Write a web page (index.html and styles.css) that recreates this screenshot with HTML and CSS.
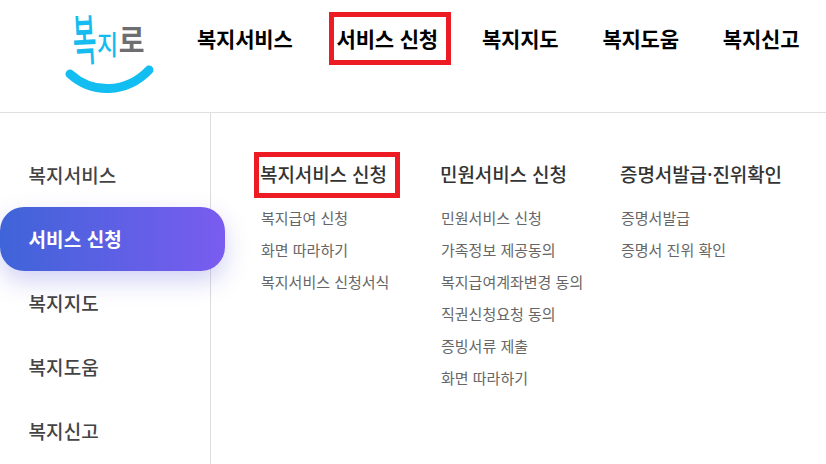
FILE: index.html
```html
<!DOCTYPE html>
<html lang="ko">
<head>
    <meta charset="UTF-8">
    <title>복지로 메뉴</title>
    <link rel="stylesheet" href="styles.css">
</head>
<body>
    <header class="top">
        <a class="logo" href="#">
            <svg class="logo-smile" width="90" height="36" viewBox="0 0 90 36">
                <path d="M6 11 C28 31 62 31 85 7" fill="none" stroke="#12bdf2" stroke-width="9" stroke-linecap="round"/>
            </svg>
            <span class="logo-word"><span class="logo-bok">복</span><span class="logo-ji">지</span><span class="logo-ro">로</span></span>
        </a>
        <nav class="gnb">
            <a href="#">복지서비스</a>
            <a href="#" class="marked">서비스 신청</a>
            <a href="#">복지지도</a>
            <a href="#">복지도움</a>
            <a href="#">복지신고</a>
        </nav>
    </header>

    <div class="menu">
        <ul class="side">
            <li>복지서비스</li>
            <li class="active">서비스 신청</li>
            <li>복지지도</li>
            <li>복지도움</li>
            <li>복지신고</li>
        </ul>
        <div class="cols">
            <section class="col">
                <h3 class="marked">복지서비스 신청</h3>
                <a href="#">복지급여 신청</a>
                <a href="#">화면 따라하기</a>
                <a href="#">복지서비스 신청서식</a>
            </section>
            <section class="col">
                <h3>민원서비스 신청</h3>
                <a href="#">민원서비스 신청</a>
                <a href="#">가족정보 제공동의</a>
                <a href="#">복지급여계좌변경 동의</a>
                <a href="#">직권신청요청 동의</a>
                <a href="#">증빙서류 제출</a>
                <a href="#">화면 따라하기</a>
            </section>
            <section class="col">
                <h3>증명서발급·진위확인</h3>
                <a href="#">증명서발급</a>
                <a href="#">증명서 진위 확인</a>
            </section>
        </div>
    </div>
</body>
</html>
```

FILE: styles.css
```css
* {
    box-sizing: border-box;
}
html, body {
    height: 100%;
}
body {
    margin: 0;
    overflow: hidden;
    background: #fff;
    font-family: "Noto Sans CJK KR", "Noto Sans", sans-serif;
}
a {
    color: inherit;
    text-decoration: none;
}

.top {
    display: flex;
    height: 113px;
    border-bottom: 1px solid #e0e0e0;
}
.logo {
    position: relative;
    display: block;
    width: 197px;
    flex: none;
}
.logo-word {
    position: absolute;
    left: 71px;
    top: 8px;
    display: flex;
    align-items: flex-start;
    line-height: 1;
}
.logo-bok {
    margin: 2px -9px 0 0;
    color: #14bcef;
    font-size: 38px;
    font-weight: 500;
    transform: rotate(-3deg) scale(0.68, 1.45);
    transform-origin: 0 0;
}
.logo-ji {
    margin: 22px -1px 0 0;
    color: #14bcef;
    font-size: 27px;
    font-weight: 500;
    transform: scaleX(0.85);
    transform-origin: 0 0;
}
.logo-ro {
    margin-top: 15px;
    margin-left: -2px;
    color: #6e6e72;
    font-size: 28px;
    font-weight: 700;
    transform: scaleY(1.12);
    transform-origin: 0 0;
}
.logo-smile {
    position: absolute;
    left: 64px;
    top: 63px;
}

.gnb {
    display: flex;
    gap: 44px;
    height: 75px;
    align-items: center;
    font-size: 21px;
    font-weight: 700;
    color: #000;
    letter-spacing: -0.2px;
}

.marked {
    position: relative;
}
.marked::after {
    content: "";
    position: absolute;
    left: -8px;
    right: -13px;
    top: -11px;
    bottom: -12px;
    border: 5px solid #ed1c24;
}

.menu {
    display: flex;
    height: 351px;
}
.side {
    list-style: none;
    margin: 0;
    padding: 30px 0 0;
    width: 211px;
    flex: none;
    border-right: 1px solid #ddd;
}
.side li {
    display: flex;
    align-items: center;
    height: 64px;
    padding: 0 0 2px 28.5px;
    font-size: 19px;
    font-weight: 500;
    color: #444;
    letter-spacing: 0.1px;
}
.side .active {
    position: relative;
    width: 225px;
    border-radius: 24px;
    background: linear-gradient(90deg, #3f64d8, #7a5cf0);
    box-shadow: 0 10px 24px rgba(90, 90, 220, 0.28);
    color: #fff;
    font-weight: 700;
}

.cols {
    display: flex;
    padding: 47px 0 0 50px;
}
.col {
    display: flex;
    flex-direction: column;
    width: 180px;
    font-size: 15px;
    color: #666;
}
.col h3 {
    align-self: flex-start;
    margin: 0 0 14px -1px;
    font-size: 19px;
    line-height: 28px;
    font-weight: 500;
    color: #333;
    letter-spacing: -0.1px;
}
.col h3.marked::after {
    left: -6px;
    right: -13px;
    top: -8px;
    bottom: -10px;
}
.col a {
    height: 32px;
    line-height: 32px;
}
```
